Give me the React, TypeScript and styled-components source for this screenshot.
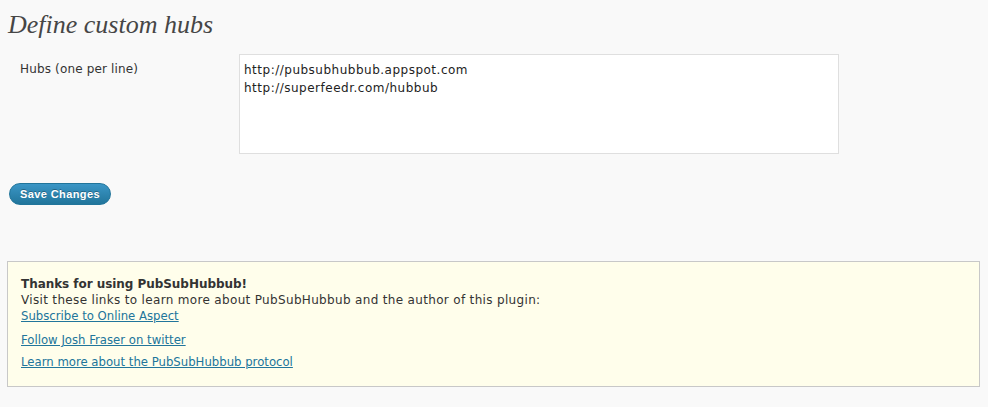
import React from "react";
import styled, { createGlobalStyle } from "styled-components";

const Global = createGlobalStyle`
  html, body { margin: 0; padding: 0; background: #f9f9f9; }
  body { font-family: "DejaVu Sans", "Liberation Sans", sans-serif; color: #333; }
`;

const Page = styled.div`
  padding: 0 8px;
  height: 407px;
  box-sizing: border-box;
  display: flex;
  flex-direction: column;
`;

const Heading = styled.h2`
  margin: 0;
  padding-top: 10px;
  height: 45px;
  box-sizing: border-box;
  font-family: "Liberation Serif", serif;
  font-style: italic;
  font-weight: normal;
  font-size: 26px;
  line-height: 30px;
  color: #464646;
`;

const FormRow = styled.div`
  display: grid;
  grid-template-columns: 231px 600px;
  align-items: start;
  padding-top: 9px;
`;

const Label = styled.label`
  padding: 0 0 0 12px;
  font-size: 12px;
  letter-spacing: 0.15px;
  line-height: 30px;
  color: #333;
`;

const TextArea = styled.textarea`
  width: 600px;
  height: 100px;
  box-sizing: border-box;
  margin: 0;
  border: 1px solid #dfdfdf;
  background: #fff;
  padding: 6px 4px 4px;
  font-family: "DejaVu Sans", sans-serif;
  font-size: 12px;
  letter-spacing: 0.5px;
  line-height: 18px;
  color: #222;
  resize: none;
  outline: none;
`;

const ButtonRow = styled.div`
  padding-top: 29px;
  padding-left: 1px;
`;

const SaveButton = styled.button`
  height: 22px;
  padding: 0 10px;
  border: 1px solid #21759b;
  border-radius: 11px;
  background: linear-gradient(#3b96c6, #21759b);
  color: #fff;
  font-family: "Liberation Sans", sans-serif;
  font-weight: bold;
  font-size: 11px;
  letter-spacing: 0.4px;
  text-shadow: 0 -1px 0 rgba(0, 0, 0, 0.3);
  cursor: pointer;
`;

const InfoBox = styled.div`
  margin-top: 56px;
  margin-left: -1px;
  width: 973px;
  height: 126px;
  box-sizing: border-box;
  background: #fffeeb;
  border: 1px solid #c8c8c8;
  padding: 14px 13px 0;
  font-size: 12px;
  line-height: 16px;
  color: #333;
`;

const Para = styled.p<{ $gap: number }>`
  margin: 0 0 ${(p) => p.$gap}px;
`;

const Bold = styled.strong`
  font-weight: bold;
  letter-spacing: -0.05px;
`;

const Body = styled.span`
  letter-spacing: 0.33px;
`;

const Link = styled.a`
  color: #21759b;
  font-size: 11.7px;
  text-decoration: underline;
`;

export default function App() {
  return (
    <>
      <Global />
      <Page>
        <Heading>Define custom hubs</Heading>
        <FormRow>
          <Label>Hubs (one per line)</Label>
          <TextArea
            readOnly
            value={"http://pubsubhubbub.appspot.com\nhttp://superfeedr.com/hubbub"}
          />
        </FormRow>
        <ButtonRow>
          <SaveButton>Save Changes</SaveButton>
        </ButtonRow>
        <InfoBox>
          <Para $gap={8}>
            <Bold>Thanks for using PubSubHubbub!</Bold>
            <br />
            <Body>Visit these links to learn more about PubSubHubbub and the author of this plugin:</Body>
            <br />
            <Link href="#">Subscribe to Online Aspect</Link>
          </Para>
          <Para $gap={6}>
            <Link href="#">Follow Josh Fraser on twitter</Link>
          </Para>
          <Para $gap={6}>
            <Link href="#">Learn more about the PubSubHubbub protocol</Link>
          </Para>
        </InfoBox>
      </Page>
    </>
  );
}
